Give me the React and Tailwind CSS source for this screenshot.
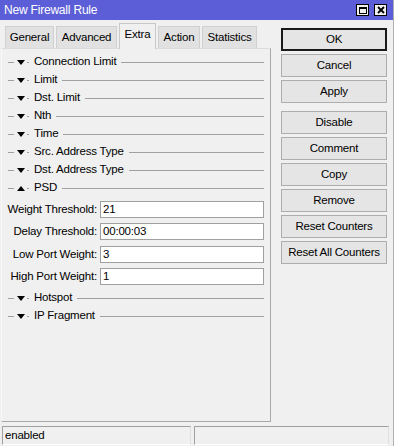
import React from "react";

const SECTIONS_TOP = [
  "Connection Limit",
  "Limit",
  "Dst. Limit",
  "Nth",
  "Time",
  "Src. Address Type",
  "Dst. Address Type",
];

const FIELDS = [
  { label: "Weight Threshold:", value: "21" },
  { label: "Delay Threshold:", value: "00:00:03" },
  { label: "Low Port Weight:", value: "3" },
  { label: "High Port Weight:", value: "1" },
];

const TABS = [
  { name: "General", w: "w-[49px]" },
  { name: "Advanced", w: "w-[61px]" },
  { name: "Extra", w: "w-[37px]" },
  { name: "Action", w: "w-[42px]" },
  { name: "Statistics", w: "w-[55px]" },
];

function Arrow({ up }) {
  return (
    <svg width="8" height="5" viewBox="0 0 8 5" className="shrink-0">
      {up ? <path d="M0 5 L4 0 L8 5 Z" fill="#000" /> : <path d="M0 0 L8 0 L4 5 Z" fill="#000" />}
    </svg>
  );
}

function Section({ title, open }) {
  return (
    <div className="flex items-center h-[18px]">
      <span className="w-[6px] h-px bg-[#a0a0a0] ml-[6px]" />
      <span className="ml-[3px]">
        <Arrow up={open} />
      </span>
      <span className="w-[2px] h-px bg-[#a0a0a0] ml-[2px]" />
      <span className="ml-[5px] leading-none">{title}</span>
      <span className="flex-1 h-px bg-[#a0a0a0] ml-[5px]" />
    </div>
  );
}

function Btn({ children, primary }) {
  return (
    <button
      className={
        "h-[23px] w-[106px] bg-[#e5e5e5] text-[11.5px] tracking-[-0.2px] text-black leading-none " +
        (primary ? "border-2 border-[#1a1a1a]" : "border border-[#adadad]")
      }
    >
      {children}
    </button>
  );
}

export default function App() {
  return (
    <div
      className="w-[394px] h-[446px] bg-[#f0f0f0] flex flex-col text-[11.5px] tracking-[-0.2px] text-black border-r border-[#b0b0b0] overflow-hidden"
      style={{ fontFamily: '"Liberation Sans", Arial, sans-serif' }}
    >
      {/* title bar */}
      <div className="h-[20px] bg-[#5b5ed6] flex items-center pl-[4px] pr-[6px]">
        <span className="text-white text-[12px] tracking-[-0.2px] leading-none">New Firewall Rule</span>
        <div className="ml-auto flex gap-[5px]">
          <div className="w-[13px] h-[12px] bg-[#f0f0f0] border border-black flex items-center justify-center">
            <div className="w-[8px] h-[7px] border border-black border-t-2" />
          </div>
          <div className="w-[13px] h-[12px] bg-[#f0f0f0] border border-black flex items-center justify-center">
            <svg width="8" height="8" viewBox="0 0 8 8">
              <path d="M1 1 L7 7 M7 1 L1 7" stroke="#000" strokeWidth="1.8" />
            </svg>
          </div>
        </div>
      </div>

      <div className="flex flex-1">
        {/* left: tabs + panel */}
        <div className="w-[271px] flex flex-col pl-[1px]">
          <div className="h-[28px] flex items-end pl-[4px] gap-[2px] relative z-10">
            {TABS.map((t) =>
              t.name === "Extra" ? (
                <div
                  key={t.name}
                  className={t.w + " h-[26px] bg-[#f0f0f0] border border-b-0 border-[#c8c8c8] flex items-center justify-center mb-[-1px] pb-[3px]"}
                >
                  {t.name}
                </div>
              ) : (
                <div
                  key={t.name}
                  className={t.w + " h-[22px] bg-[#e1e1e1] border border-b-0 border-[#d0d0d0] flex items-center justify-center"}
                >
                  {t.name}
                </div>
              )
            )}
          </div>
          <div className="h-[374px] border border-[#a8a8a8] border-t-[#dcdcdc] border-l-[#f8f8f8] pt-[4px] pr-[6px] flex flex-col">
            {SECTIONS_TOP.map((s) => (
              <Section key={s} title={s} />
            ))}
            <Section title="PSD" open />
            <div className="flex flex-col gap-[5px] mt-[4px]">
              {FIELDS.map((f) => (
                <div key={f.label} className="flex items-center">
                  <span className="w-[95px] text-right whitespace-nowrap">{f.label}</span>
                  <div className="ml-[3px] flex-1 h-[17px] bg-white border border-[#a0a0a0] flex items-center pl-[2px]">
                    {f.value}
                  </div>
                </div>
              ))}
            </div>
            <div className="mt-[4px]">
              <Section title="Hotspot" />
              <Section title="IP Fragment" />
            </div>
          </div>
        </div>

        {/* right: buttons */}
        <div className="ml-[10px] pt-[8px] flex flex-col">
          <div className="flex flex-col gap-[3px]">
            <Btn primary>OK</Btn>
            <Btn>Cancel</Btn>
            <Btn>Apply</Btn>
          </div>
          <div className="flex flex-col gap-[3px] mt-[8px]">
            <Btn>Disable</Btn>
            <Btn>Comment</Btn>
            <Btn>Copy</Btn>
            <Btn>Remove</Btn>
            <Btn>Reset Counters</Btn>
            <Btn>Reset All Counters</Btn>
          </div>
        </div>
      </div>

      {/* status bar */}
      <div className="h-[22px] flex gap-[3px] pl-[2px] pr-[4px] pt-[2px] pb-[1px]">
        <div className="w-[189px] border border-[#a0a0a0] border-r-[#e0e0e0] border-b-[#ffffff] flex items-center pl-[2px]">
          enabled
        </div>
        <div className="flex-1 border border-[#a0a0a0] border-r-[#e0e0e0] border-b-[#ffffff]" />
      </div>
    </div>
  );
}
